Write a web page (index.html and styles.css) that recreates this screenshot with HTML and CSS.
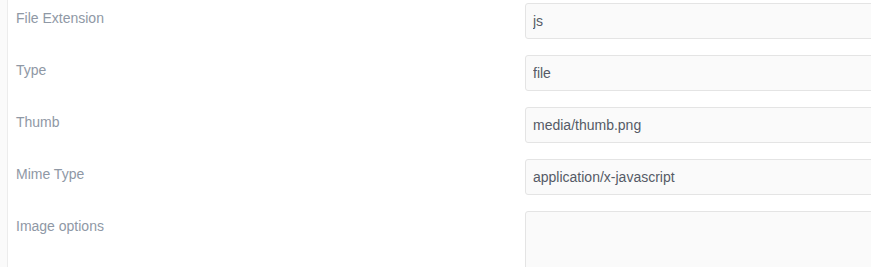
FILE: index.html
```html
<!DOCTYPE html>
<html>
<head>
<meta charset="utf-8">
<link rel="stylesheet" href="styles.css">
</head>
<body>
<div class="side"></div>
<form class="panel">
  <div class="row">
    <label class="label">File Extension</label>
    <input class="field" type="text" value="js">
  </div>
  <div class="row">
    <label class="label">Type</label>
    <input class="field" type="text" value="file">
  </div>
  <div class="row">
    <label class="label">Thumb</label>
    <input class="field" type="text" value="media/thumb.png">
  </div>
  <div class="row">
    <label class="label">Mime Type</label>
    <input class="field" type="text" value="application/x-javascript">
  </div>
  <div class="row">
    <label class="label">Image options</label>
    <textarea class="field area"></textarea>
  </div>
</form>
</body>
</html>
```
FILE: styles.css
```css
html, body {
  margin: 0;
  padding: 0;
  background: #ffffff;
  overflow: hidden;
  height: 267px;
}
body {
  display: flex;
  font-family: "Liberation Sans", Arial, sans-serif;
  font-size: 14px;
}
.side {
  width: 7px;
  flex: none;
  background: #fafafa;
  border-right: 1px solid #ececec;
  height: 267px;
}
.panel {
  flex: 1;
  padding: 3px 0 0 8px;
  margin: 0;
  display: flex;
  flex-direction: column;
  gap: 16px;
}
.row {
  display: flex;
  align-items: flex-start;
}
.label {
  width: 509px;
  flex: none;
  color: #8f98a5;
  line-height: 20px;
  padding-top: 5px;
}
.field {
  box-sizing: border-box;
  width: 360px;
  flex: none;
  height: 36px;
  border: 1px solid #e4e4e4;
  border-radius: 3px;
  background: #fafafa;
  color: #555a66;
  font-family: "Liberation Sans", Arial, sans-serif;
  font-size: 14px;
  padding: 0 7px;
  margin: 0;
  outline: none;
}
.area {
  height: 80px;
  resize: none;
}
```
